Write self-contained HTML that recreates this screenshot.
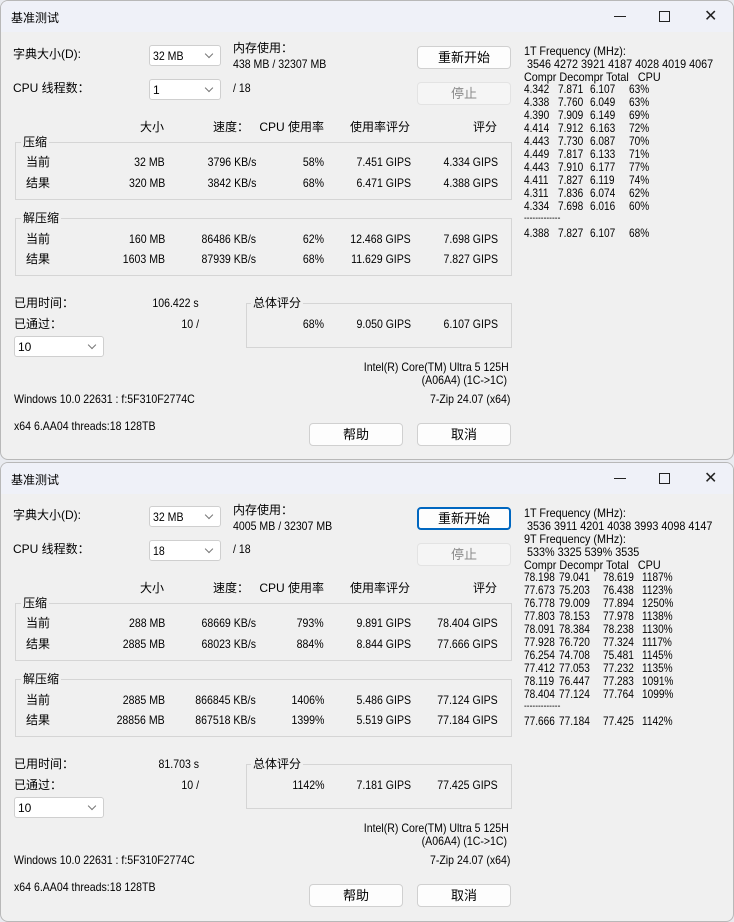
<!DOCTYPE html>
<html><head><meta charset="utf-8"><style>
*{margin:0;padding:0;box-sizing:border-box}
body{width:734px;height:922px;background:#e9ebf0;font-family:"Liberation Sans","Noto Sans CJK SC",sans-serif;font-size:12px;color:#000;position:relative;overflow:hidden}
.win{position:absolute;left:0;width:734px;height:460px;background:#f0f0f0;border:1px solid #b8b8b8;border-radius:8px;overflow:hidden}
.tb{position:absolute;left:0;top:0;width:100%;height:31px;background:#eff1f8}
.tt{position:absolute;left:10px;top:8px;font-size:12px}
.ctl{position:absolute;top:6px;font-size:16px;color:#222}
.a{position:absolute;white-space:pre;line-height:14px}
.r{position:absolute;white-space:pre;line-height:14px;text-align:right}
.a.l{transform:scaleX(.88);transform-origin:left}
.a.h{transform:scaleX(.9);transform-origin:left}
.r.l{transform:scaleX(.88);transform-origin:right}
.cb{position:absolute;background:#fff;border:1px solid #cfcfcf;border-radius:3px;height:21px;padding:3px 0 0 3px}
.cb:after{content:"";position:absolute;right:8px;top:5px;width:5px;height:5px;border-right:1px solid #777;border-bottom:1px solid #777;transform:rotate(45deg)}
.bt{position:absolute;width:94px;height:23px;background:#fdfdfd;border:1px solid #d0d0d0;border-radius:4px;text-align:center;line-height:21px;font-size:13px}
.dis{background:#f5f5f5;border-color:#e3e3e3;color:#8a8a8a}
.foc{border:2px solid #0067c0;line-height:19px}
.gb{position:absolute;border:1px solid #d5d5d5}
.gl{position:absolute;background:#f0f0f0;padding:0 2px;line-height:14px}
.rc .a{line-height:13px;transform:scaleX(.84);transform-origin:left}
.rc div{position:relative;height:13px}
</style></head><body>

<!-- WINDOW 1 -->
<div class="win" style="top:0">
<div class="tb"><span class="tt">基准测试</span>
<span style="position:absolute;left:613px;top:15px;width:12px;height:1px;background:#222"></span>
<span style="position:absolute;left:658px;top:10px;width:11px;height:11px;border:1px solid #222"></span>
<span class="ctl" style="left:703px;top:5px">&#10005;</span></div>
<span class="a" style="left:12px;top:46px">字典大小(D):</span>
<div class="cb" style="left:148px;top:44px;width:72px"><span class="a l" style="left:3px;top:3px">32 MB</span></div>
<span class="a" style="left:232px;top:40px">内存使用：</span>
<span class="a l" style="left:232px;top:56px">438 MB / 32307 MB</span>
<span class="a" style="left:12px;top:80px">CPU 线程数：</span>
<div class="cb" style="left:148px;top:78px;width:72px">1</div>
<span class="a l" style="left:232px;top:80px">/ 18</span>
<div class="bt" style="left:416px;top:45px">重新开始</div>
<div class="bt dis" style="left:416px;top:81px">停止</div>

<span class="r" style="right:569px;top:119px">大小</span>
<span class="r" style="right:484px;top:119px">速度：</span>
<span class="r" style="right:409px;top:119px">CPU 使用率</span>
<span class="r" style="right:323px;top:119px">使用率评分</span>
<span class="r" style="right:236px;top:119px">评分</span>

<div class="gb" style="left:14px;top:141px;width:497px;height:58px"></div>
<span class="gl" style="left:20px;top:134px">压缩</span>
<span class="a" style="left:25px;top:154px">当前</span><span class="r l" style="right:568px;top:154px">32 MB</span><span class="r l" style="right:477px;top:154px">3796 KB/s</span><span class="r l" style="right:409px;top:154px">58%</span><span class="r l" style="right:322px;top:154px">7.451 GIPS</span><span class="r l" style="right:235px;top:154px">4.334 GIPS</span>
<span class="a" style="left:25px;top:175px">结果</span><span class="r l" style="right:568px;top:175px">320 MB</span><span class="r l" style="right:477px;top:175px">3842 KB/s</span><span class="r l" style="right:409px;top:175px">68%</span><span class="r l" style="right:322px;top:175px">6.471 GIPS</span><span class="r l" style="right:235px;top:175px">4.388 GIPS</span>

<div class="gb" style="left:14px;top:217px;width:497px;height:58px"></div>
<span class="gl" style="left:20px;top:210px">解压缩</span>
<span class="a" style="left:25px;top:231px">当前</span><span class="r l" style="right:568px;top:231px">160 MB</span><span class="r l" style="right:477px;top:231px">86486 KB/s</span><span class="r l" style="right:409px;top:231px">62%</span><span class="r l" style="right:322px;top:231px">12.468 GIPS</span><span class="r l" style="right:235px;top:231px">7.698 GIPS</span>
<span class="a" style="left:25px;top:251px">结果</span><span class="r l" style="right:568px;top:251px">1603 MB</span><span class="r l" style="right:477px;top:251px">87939 KB/s</span><span class="r l" style="right:409px;top:251px">68%</span><span class="r l" style="right:322px;top:251px">11.629 GIPS</span><span class="r l" style="right:235px;top:251px">7.827 GIPS</span>

<span class="a" style="left:13px;top:295px">已用时间：</span><span class="r l" style="right:534px;top:295px">106.422 s</span>
<span class="a" style="left:13px;top:316px">已通过：</span><span class="r l" style="right:534px;top:316px">10 /</span>
<div class="cb" style="left:13px;top:335px;width:90px">10</div>
<div class="gb" style="left:245px;top:302px;width:266px;height:45px"></div>
<span class="gl" style="left:250px;top:295px">总体评分</span>
<span class="r l" style="right:409px;top:316px">68%</span><span class="r l" style="right:322px;top:316px">9.050 GIPS</span><span class="r l" style="right:235px;top:316px">6.107 GIPS</span>
<span class="r l" style="right:224px;top:359px">Intel(R) Core(TM) Ultra 5 125H</span>
<span class="r l" style="right:226px;top:372px">(A06A4) (1C-&gt;1C)</span>
<span class="a l" style="left:13px;top:391px">Windows 10.0 22631 : f:5F310F2774C</span>
<span class="r l" style="right:223px;top:391px">7-Zip 24.07 (x64)</span>
<span class="a l" style="left:13px;top:418px">x64 6.AA04 threads:18 128TB</span>
<div class="bt" style="left:308px;top:422px">帮助</div>
<div class="bt" style="left:416px;top:422px">取消</div>

<span class="a h" style="left:523px;top:43px">1T Frequency (MHz):</span>
<span class="a h" style="left:526px;top:56px">3546 4272 3921 4187 4028 4019 4067</span>
<span class="a h" style="left:523px;top:69px">Compr Decompr Total   CPU</span>
<div class="rc" style="position:absolute;left:523px;top:82px">
<div><span class="a" style="left:0">4.342</span><span class="a" style="left:34px">7.871</span><span class="a" style="left:66px">6.107</span><span class="a" style="left:105px">63%</span></div>
<div><span class="a" style="left:0">4.338</span><span class="a" style="left:34px">7.760</span><span class="a" style="left:66px">6.049</span><span class="a" style="left:105px">63%</span></div>
<div><span class="a" style="left:0">4.390</span><span class="a" style="left:34px">7.909</span><span class="a" style="left:66px">6.149</span><span class="a" style="left:105px">69%</span></div>
<div><span class="a" style="left:0">4.414</span><span class="a" style="left:34px">7.912</span><span class="a" style="left:66px">6.163</span><span class="a" style="left:105px">72%</span></div>
<div><span class="a" style="left:0">4.443</span><span class="a" style="left:34px">7.730</span><span class="a" style="left:66px">6.087</span><span class="a" style="left:105px">70%</span></div>
<div><span class="a" style="left:0">4.449</span><span class="a" style="left:34px">7.817</span><span class="a" style="left:66px">6.133</span><span class="a" style="left:105px">71%</span></div>
<div><span class="a" style="left:0">4.443</span><span class="a" style="left:34px">7.910</span><span class="a" style="left:66px">6.177</span><span class="a" style="left:105px">77%</span></div>
<div><span class="a" style="left:0">4.411</span><span class="a" style="left:34px">7.827</span><span class="a" style="left:66px">6.119</span><span class="a" style="left:105px">74%</span></div>
<div><span class="a" style="left:0">4.311</span><span class="a" style="left:34px">7.836</span><span class="a" style="left:66px">6.074</span><span class="a" style="left:105px">62%</span></div>
<div><span class="a" style="left:0">4.334</span><span class="a" style="left:34px">7.698</span><span class="a" style="left:66px">6.016</span><span class="a" style="left:105px">60%</span></div>
<div><span class="a" style="left:0;line-height:11px;font-size:10px">-------------</span></div>
<div style="top:1px"><span class="a" style="left:0">4.388</span><span class="a" style="left:34px">7.827</span><span class="a" style="left:66px">6.107</span><span class="a" style="left:105px">68%</span></div>
</div>
</div>

<!-- WINDOW 2 -->
<div class="win" style="top:462px">
<div class="tb"><span class="tt">基准测试</span>
<span style="position:absolute;left:613px;top:15px;width:12px;height:1px;background:#222"></span>
<span style="position:absolute;left:658px;top:10px;width:11px;height:11px;border:1px solid #222"></span>
<span class="ctl" style="left:703px;top:5px">&#10005;</span></div>
<span class="a" style="left:12px;top:45px">字典大小(D):</span>
<div class="cb" style="left:148px;top:43px;width:72px"><span class="a l" style="left:3px;top:3px">32 MB</span></div>
<span class="a" style="left:232px;top:40px">内存使用：</span>
<span class="a l" style="left:232px;top:56px">4005 MB / 32307 MB</span>
<span class="a" style="left:12px;top:79px">CPU 线程数：</span>
<div class="cb" style="left:148px;top:77px;width:72px"><span class="a l" style="left:3px;top:3px">18</span></div>
<span class="a l" style="left:232px;top:79px">/ 18</span>
<div class="bt foc" style="left:416px;top:44px">重新开始</div>
<div class="bt dis" style="left:416px;top:80px">停止</div>

<span class="r" style="right:569px;top:118px">大小</span>
<span class="r" style="right:484px;top:118px">速度：</span>
<span class="r" style="right:409px;top:118px">CPU 使用率</span>
<span class="r" style="right:323px;top:118px">使用率评分</span>
<span class="r" style="right:236px;top:118px">评分</span>

<div class="gb" style="left:14px;top:140px;width:497px;height:58px"></div>
<span class="gl" style="left:20px;top:133px">压缩</span>
<span class="a" style="left:25px;top:153px">当前</span><span class="r l" style="right:568px;top:153px">288 MB</span><span class="r l" style="right:477px;top:153px">68669 KB/s</span><span class="r l" style="right:409px;top:153px">793%</span><span class="r l" style="right:322px;top:153px">9.891 GIPS</span><span class="r l" style="right:235px;top:153px">78.404 GIPS</span>
<span class="a" style="left:25px;top:174px">结果</span><span class="r l" style="right:568px;top:174px">2885 MB</span><span class="r l" style="right:477px;top:174px">68023 KB/s</span><span class="r l" style="right:409px;top:174px">884%</span><span class="r l" style="right:322px;top:174px">8.844 GIPS</span><span class="r l" style="right:235px;top:174px">77.666 GIPS</span>

<div class="gb" style="left:14px;top:216px;width:497px;height:58px"></div>
<span class="gl" style="left:20px;top:209px">解压缩</span>
<span class="a" style="left:25px;top:230px">当前</span><span class="r l" style="right:568px;top:230px">2885 MB</span><span class="r l" style="right:477px;top:230px">866845 KB/s</span><span class="r l" style="right:409px;top:230px">1406%</span><span class="r l" style="right:322px;top:230px">5.486 GIPS</span><span class="r l" style="right:235px;top:230px">77.124 GIPS</span>
<span class="a" style="left:25px;top:250px">结果</span><span class="r l" style="right:568px;top:250px">28856 MB</span><span class="r l" style="right:477px;top:250px">867518 KB/s</span><span class="r l" style="right:409px;top:250px">1399%</span><span class="r l" style="right:322px;top:250px">5.519 GIPS</span><span class="r l" style="right:235px;top:250px">77.184 GIPS</span>

<span class="a" style="left:13px;top:294px">已用时间：</span><span class="r l" style="right:534px;top:294px">81.703 s</span>
<span class="a" style="left:13px;top:315px">已通过：</span><span class="r l" style="right:534px;top:315px">10 /</span>
<div class="cb" style="left:13px;top:334px;width:90px">10</div>
<div class="gb" style="left:245px;top:301px;width:266px;height:45px"></div>
<span class="gl" style="left:250px;top:294px">总体评分</span>
<span class="r l" style="right:409px;top:315px">1142%</span><span class="r l" style="right:322px;top:315px">7.181 GIPS</span><span class="r l" style="right:235px;top:315px">77.425 GIPS</span>
<span class="r l" style="right:224px;top:358px">Intel(R) Core(TM) Ultra 5 125H</span>
<span class="r l" style="right:226px;top:371px">(A06A4) (1C-&gt;1C)</span>
<span class="a l" style="left:13px;top:390px">Windows 10.0 22631 : f:5F310F2774C</span>
<span class="r l" style="right:223px;top:390px">7-Zip 24.07 (x64)</span>
<span class="a l" style="left:13px;top:417px">x64 6.AA04 threads:18 128TB</span>
<div class="bt" style="left:308px;top:421px">帮助</div>
<div class="bt" style="left:416px;top:421px">取消</div>

<span class="a h" style="left:523px;top:43px">1T Frequency (MHz):</span>
<span class="a h" style="left:526px;top:56px">3536 3911 4201 4038 3993 4098 4147</span>
<span class="a h" style="left:523px;top:69px">9T Frequency (MHz):</span>
<span class="a h" style="left:526px;top:82px">533% 3325 539% 3535</span>
<span class="a h" style="left:523px;top:95px">Compr Decompr Total   CPU</span>
<div class="rc" style="position:absolute;left:523px;top:108px">
<div><span class="a" style="left:0">78.198</span><span class="a" style="left:35px">79.041</span><span class="a" style="left:79px">78.619</span><span class="a" style="left:118px">1187%</span></div>
<div><span class="a" style="left:0">77.673</span><span class="a" style="left:35px">75.203</span><span class="a" style="left:79px">76.438</span><span class="a" style="left:118px">1123%</span></div>
<div><span class="a" style="left:0">76.778</span><span class="a" style="left:35px">79.009</span><span class="a" style="left:79px">77.894</span><span class="a" style="left:118px">1250%</span></div>
<div><span class="a" style="left:0">77.803</span><span class="a" style="left:35px">78.153</span><span class="a" style="left:79px">77.978</span><span class="a" style="left:118px">1138%</span></div>
<div><span class="a" style="left:0">78.091</span><span class="a" style="left:35px">78.384</span><span class="a" style="left:79px">78.238</span><span class="a" style="left:118px">1130%</span></div>
<div><span class="a" style="left:0">77.928</span><span class="a" style="left:35px">76.720</span><span class="a" style="left:79px">77.324</span><span class="a" style="left:118px">1117%</span></div>
<div><span class="a" style="left:0">76.254</span><span class="a" style="left:35px">74.708</span><span class="a" style="left:79px">75.481</span><span class="a" style="left:118px">1145%</span></div>
<div><span class="a" style="left:0">77.412</span><span class="a" style="left:35px">77.053</span><span class="a" style="left:79px">77.232</span><span class="a" style="left:118px">1135%</span></div>
<div><span class="a" style="left:0">78.119</span><span class="a" style="left:35px">76.447</span><span class="a" style="left:79px">77.283</span><span class="a" style="left:118px">1091%</span></div>
<div><span class="a" style="left:0">78.404</span><span class="a" style="left:35px">77.124</span><span class="a" style="left:79px">77.764</span><span class="a" style="left:118px">1099%</span></div>
<div><span class="a" style="left:0;line-height:11px;font-size:10px">-------------</span></div>
<div style="top:1px"><span class="a" style="left:0">77.666</span><span class="a" style="left:35px">77.184</span><span class="a" style="left:79px">77.425</span><span class="a" style="left:118px">1142%</span></div>
</div>
</div>
</body></html>
